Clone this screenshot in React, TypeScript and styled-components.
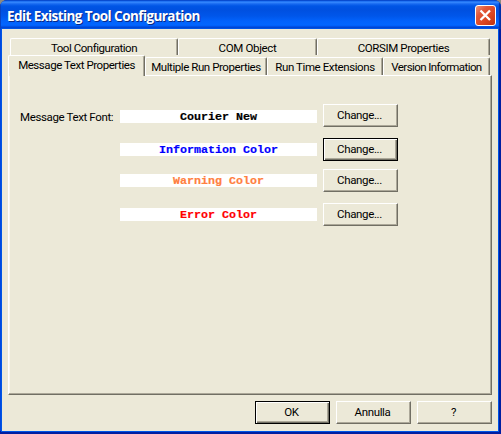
import React from "react";
import styled, { createGlobalStyle, css } from "styled-components";

const GlobalStyle = createGlobalStyle`
  html, body { margin: 0; padding: 0; background: #8e8a80; }
  * { box-sizing: border-box; }
  body { width: 501px; height: 434px; overflow: hidden; }
`;

const Dialog = styled.div`
  width: 501px;
  height: 434px;
  display: flex;
  flex-direction: column;
  border-radius: 7px 7px 0 0;
  overflow: hidden;
  background: #001ea0;
  font-family: Roboto, "Liberation Sans", sans-serif;
  font-size: 11.5px;
  color: #000;
`;

const TitleBar = styled.header`
  height: 29px;
  flex: none;
  display: flex;
  align-items: center;
  justify-content: space-between;
  padding: 2px 5px 0 7px;
  box-shadow: inset 1px 0 0 #0842c0, inset -2px 0 1px #0030a8;
  background: linear-gradient(
    to bottom,
    #0842c0 0px, #0a5ce8 1px, #3a8cff 2px, #1668f0 4px, #0055e5 6px, #0050e0 10px,
    #0056ea 16px, #0262fb 21px, #0266ff 25px, #005cf5 26px, #0048d8 27px, #003cc8 29px
  );
`;

const Title = styled.h1<{ $spacing: number }>`
  margin: 0;
  font: bold 13.5px/20px "Open Sans", sans-serif;
  letter-spacing: ${(p) => p.$spacing}px;
  color: #fff;
  text-shadow: 1px 1px 0 #0a2a86;
  white-space: nowrap;
`;

const CloseButton = styled.button`
  width: 21px;
  height: 21px;
  padding: 0;
  border: 1px solid #fff;
  border-radius: 3px;
  background: linear-gradient(135deg, #ee9478 0%, #e2583a 30%, #da4520 65%, #bb3210 100%);
  display: flex;
  svg { display: block; }
`;

const Client = styled.main`
  flex: 1;
  margin: 0 3px 3px 2px;
  background: #ece9d8;
  box-shadow: 0 0 0 1px #0055e5, -2px 0 0 #0048e0;
  padding: 9px 6px 0;
`;

const TabRow = styled.div<{ $front?: boolean }>`
  display: flex;
  align-items: flex-end;
  height: ${(p) => (p.$front ? 20 : 17)}px;
  padding-left: ${(p) => (p.$front ? 0 : 2)}px;
`;

const Tab = styled.div<{ $width: number; $spacing: number; $active?: boolean; $tall?: boolean }>`
  width: ${(p) => p.$width}px;
  height: ${(p) => (p.$active ? 21 : p.$tall ? 17 : 18)}px;
  flex: none;
  border-top: 1px solid #fff;
  border-left: 1px solid #fff;
  border-right: 1px solid #716f64;
  border-radius: 2px 2px 0 0;
  box-shadow: inset -1px 0 0 #aca899;
  background: #ece9d8;
  line-height: ${(p) => (p.$active ? 19 : 18)}px;
  text-align: center;
  white-space: nowrap;
  letter-spacing: ${(p) => p.$spacing}px;
  ${(p) =>
    p.$active &&
    css`
      position: relative;
      margin-bottom: -1px;
    `}
`;

const Panel = styled.section`
  height: 320px;
  width: 484px;
  border: 1px solid;
  border-color: #fff #716f64 #716f64 #fff;
  box-shadow: inset -1px -1px 0 #aca899, inset 1px 0 0 #f8f6ee;
  padding: 28px 0 0 11px;
`;

const SettingRow = styled.div<{ $gap: number; $drop?: number }>`
  display: grid;
  grid-template-columns: 100px 197px 75px;
  height: 23px;
  margin-bottom: ${(p) => p.$gap}px;
  > :last-child { margin-left: 6px; }
  > :nth-child(2) { margin-top: ${(p) => p.$drop ?? 5}px; }
`;

const Label = styled.label`
  line-height: 26px;
  white-space: nowrap;
  letter-spacing: -0.37px;
`;

const Sample = styled.div<{ $color: string }>`
  height: 13px;
  background: #fff;
  color: ${(p) => p.$color};
  font: bold 11.67px/14px "Liberation Mono", monospace;
  -webkit-text-stroke: 0.2px currentColor;
  text-align: center;
  white-space: nowrap;
`;

const Button = styled.button<{ $default?: boolean }>`
  width: 75px;
  height: 23px;
  flex: none;
  padding: 0 2px 1px 0;
  background: #ece9d8;
  color: #000;
  font: inherit;
  line-height: 19px;
  letter-spacing: -0.35px;
  border: 1px solid;
  ${(p) =>
    p.$default
      ? css`
          border-color: #000;
          box-shadow: inset 1px 1px 0 #fff, inset -1px -1px 0 #716f64, inset -2px -2px 0 #aca899;
        `
      : css`
          border-color: #fff #716f64 #716f64 #fff;
          box-shadow: inset -1px -1px 0 #aca899;
        `}
`;

const Actions = styled.footer`
  display: flex;
  justify-content: flex-end;
  gap: 6px;
  width: 484px;
  padding-top: 6px;
`;

const backTabs = [
  { text: "Tool Configuration", width: 168, spacing: -0.46 },
  { text: "COM Object", width: 139, spacing: -0.33 },
  { text: "CORSIM Properties", width: 173, spacing: -0.4 },
];

const frontTabs = [
  { text: "Message Text Properties", width: 137, spacing: -0.45, active: true },
  { text: "Multiple Run Properties", width: 122, spacing: -0.43 },
  { text: "Run Time Extensions", width: 116, spacing: -0.41 },
  { text: "Version Information", width: 107, spacing: -0.58 },
];

const settings = [
  { label: "Message Text Font:", text: "Courier New", color: "#000", gap: 11, drop: 6 },
  { label: "", text: "Information Color", color: "#0000ff", gap: 8, selected: true },
  { label: "", text: "Warning Color", color: "#ff8040", gap: 11 },
  { label: "", text: "Error Color", color: "#ff0000", gap: 0 },
];

export default function App() {
  return (
    <>
      <GlobalStyle />
      <Dialog>
        <TitleBar>
          <Title $spacing={-0.57}>Edit Existing Tool Configuration</Title>
          <CloseButton aria-label="Close">
            <svg width="19" height="19" viewBox="0 0 19 19">
              <path d="M4.5 4.5 L14 14 M14 4.5 L4.5 14" stroke="#fff" strokeWidth="2.3" />
            </svg>
          </CloseButton>
        </TitleBar>
        <Client>
          <TabRow>
            {backTabs.map((t) => (
              <Tab key={t.text} $width={t.width} $spacing={t.spacing} $tall>
                {t.text}
              </Tab>
            ))}
          </TabRow>
          <TabRow $front>
            {frontTabs.map((t) => (
              <Tab key={t.text} $width={t.width} $spacing={t.spacing} $active={t.active}>
                {t.text}
              </Tab>
            ))}
          </TabRow>
          <Panel>
            {settings.map((s) => (
              <SettingRow key={s.text} $gap={s.gap} $drop={s.drop}>
                <Label>{s.label}</Label>
                <Sample $color={s.color}>{s.text}</Sample>
                <Button $default={s.selected}>Change...</Button>
              </SettingRow>
            ))}
          </Panel>
          <Actions>
            <Button $default>OK</Button>
            <Button>Annulla</Button>
            <Button>?</Button>
          </Actions>
        </Client>
      </Dialog>
    </>
  );
}
